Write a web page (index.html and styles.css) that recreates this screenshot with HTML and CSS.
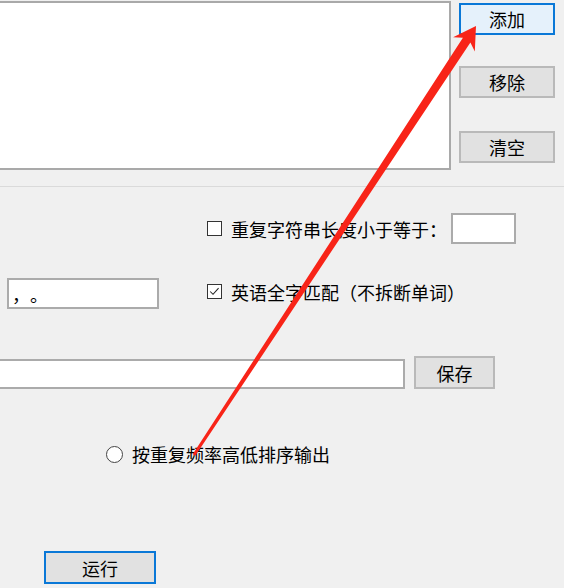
FILE: index.html
```html
<!DOCTYPE html>
<html lang="zh">
    <head>
        <meta charset="utf-8">
        <title>重复字符串查找</title>

        <link rel="stylesheet" href="styles.css">
    </head>

    <body>
        <div class="window">
            <div class="top">
                <div class="list"></div>

                <div class="side">
                    <button class="btn btn-add focus">添加</button>
                    <button class="btn btn-remove">移除</button>
                    <button class="btn btn-clear">清空</button>
                </div>
            </div>

            <div class="sep"></div>

            <div class="row row-len">
                <label class="check"><span class="box"></span>重复字符串长度小于等于：</label>
                <input class="field field-len">
            </div>

            <div class="row row-punct">
                <input class="field field-punct" value="，。">
                <label class="check check-word">
                    <span class="box">
                        <svg viewBox="0 0 15 15" width="13" height="13"><path d="M2.5 7.5 L5.8 10.8 L12.2 3.6" fill="none" stroke="#222" stroke-width="1.2"/></svg>
                    </span>英语全字匹配（不拆断单词）
                </label>
            </div>

            <div class="row row-save">
                <input class="field field-path">
                <button class="btn btn-save">保存</button>
            </div>

            <div class="row row-sort">
                <label class="radio"><span class="dot"></span>按重复频率高低排序输出</label>
            </div>

            <div class="row row-run">
                <button class="btn btn-run focus">运行</button>
            </div>
        </div>

        <!-- annotation arrow drawn over the form -->
        <svg class="arrow" width="564" height="588" viewBox="0 0 564 588">
            <polygon points="476,26 474.8,51.5 470.4,42.6 195.3,455.8 192.7,454.2 462.9,37.8 453.1,37.3" fill="#f82418"/>
        </svg>
    </body>
</html>
```

FILE: styles.css
```css
body {
    margin: 0;
    padding: 0;
    width: 564px;
    height: 588px;
    overflow: hidden;
    background-color: #f0f0f0;

    font-family: "Noto Sans CJK SC", "Microsoft YaHei", sans-serif;
    font-size: 18px;
    color: #000;
    text-spacing-trim: space-all;
}

.window {
    display: flex;
    flex-direction: column;
}

.top {
    display: flex;
    padding-top: 1px;
}

.list {
    box-sizing: border-box;
    width: 453px;
    height: 169px;
    margin-left: -2px;
    background-color: #fff;
    border: 2px solid #a9a9a9;
}

.side {
    display: flex;
    flex-direction: column;
    margin-left: 8px;
    margin-top: 2px;
}

.btn {
    box-sizing: border-box;
    width: 96px;
    height: 32px;
    padding: 0;
    border: 2px solid #b9b9b9;
    background-color: #e1e1e1;
    font-family: inherit;
    font-size: 18px;
    color: #000;
    line-height: 1;
}

.btn.focus {
    border-color: #0a78d7;
}

.btn-add {
    background-color: #e5f1fb;
}

.btn-remove {
    margin-top: 31px;
}

.btn-clear {
    margin-top: 33px;
}

.sep {
    height: 1px;
    margin-top: 16px;
    background-color: #dadada;
}

.row {
    display: flex;
    align-items: center;
}

.field {
    box-sizing: border-box;
    height: 31px;
    padding: 0 4px;
    border: 2px solid #ababab;
    background-color: #fff;
    outline: none;
    font-family: inherit;
    font-size: 18px;
    text-spacing-trim: space-all;
}

.check, .radio {
    display: flex;
    align-items: center;
    white-space: nowrap;
}

.box {
    box-sizing: border-box;
    display: flex;
    align-items: center;
    justify-content: center;
    width: 15px;
    height: 15px;
    margin-right: 9px;
    border: 1px solid #333;
    background-color: #fff;
}

.dot {
    box-sizing: border-box;
    width: 17px;
    height: 17px;
    margin-right: 9px;
    border: 1.5px solid #444;
    border-radius: 50%;
    background-color: #fff;
}

.row-len {
    height: 31px;
    margin-top: 26px;
    padding-left: 207px;
}

.field-len {
    width: 65px;
    margin-left: 4px;
}

.row-punct {
    height: 31px;
    margin-top: 34px;
    padding-left: 7px;
}

.field-punct {
    width: 152px;
    padding-left: 3px;
}

.check-word {
    margin-left: 48px;
    margin-top: -4px;
}

.row-save {
    align-items: flex-start;
    height: 33px;
    margin-top: 47px;
}

.field-path {
    width: 407px;
    height: 30px;
    margin-top: 3px;
    margin-left: -2px;
}

.btn-save {
    width: 81px;
    height: 33px;
    margin-left: 9px;
}

.row-sort {
    height: 24px;
    margin-top: 53px;
    padding-left: 106px;
}

.row-run {
    height: 33px;
    margin-top: 85px;
    padding-left: 44px;
}

.btn-run {
    width: 112px;
    height: 33px;
}

.arrow {
    position: absolute;
    top: 0;
    left: 0;
    pointer-events: none;
}
```
